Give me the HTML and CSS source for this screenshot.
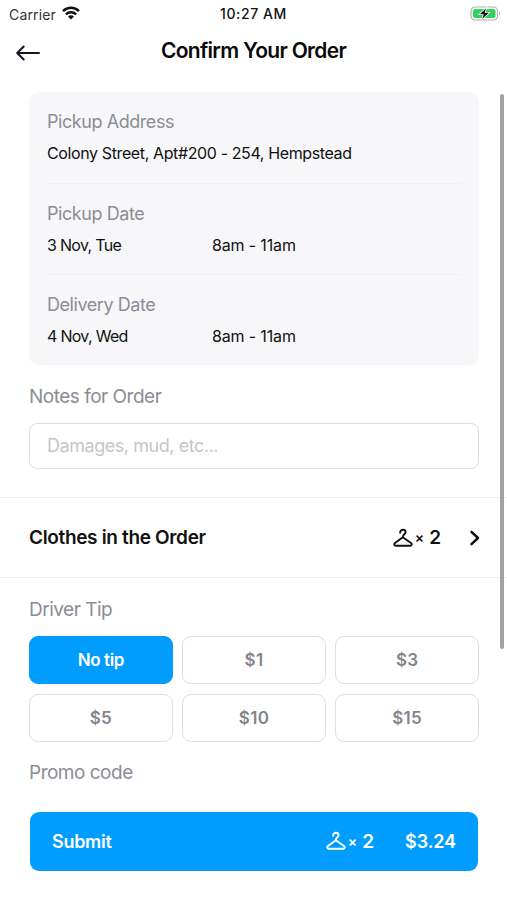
FILE: index.html
```html
<!DOCTYPE html>
<html lang="en">
<head>
<meta charset="utf-8">
<title>Confirm Your Order</title>
<link rel="stylesheet" href="styles.css">
</head>
<body>
<svg class="defs" width="0" height="0" aria-hidden="true">
  <symbol id="hanger" viewBox="0 0 20 20">
    <path d="M7.100 4.700C7.100 2.900 8.300 1.800 9.900 1.800c1.500 0 2.700 1 2.700 2.400 0 2.100-3 2.200-2.800 5.100M9.800 9.300 2 15c-1.300 1-.8 2.700.8 2.700h14.400c1.600 0 2.100-1.700.8-2.700z" fill="none" stroke="currentColor" stroke-width="1.900" stroke-linecap="round" stroke-linejoin="round"/>
  </symbol>
</svg>
<div class="screen">
  <div class="status">
    <div class="carrier"><span class="carrier-name">Carrier</span>
      <svg class="wifi" width="18" height="14" viewBox="0 0 18 14"><g fill="none" stroke="#111" stroke-width="2.500"><path d="M1 5.100a11.300 11.300 0 0 1 16 0"/><path d="M3.900 8.300a7.200 7.200 0 0 1 10.200 0"/></g><path d="M9 13.600 6 10.600a4.200 4.200 0 0 1 6 0z" fill="#111"/></svg>
    </div>
    <span class="clock">10:27 AM</span>
    <svg class="battery" width="32" height="16" viewBox="0 0 32 16"><rect x="1" y="1" width="26.500" height="13" rx="4" fill="#fff" stroke="#b0b0b0" stroke-width="1.200"/><rect x="3" y="3" width="22.500" height="9" rx="2" fill="#35d162"/><path d="M29 5.500v4.200c1.600-.7 1.600-3.500 0-4.200z" fill="#aaa"/><path d="M16 2.200 9.800 8.200h4l-1.600 4.800 6.600-6.200h-4.200z" fill="#111" stroke="#fff" stroke-width="1.600" paint-order="stroke"/></svg>
  </div>
  <header class="header">
    <svg class="back" width="26" height="18" viewBox="0 0 26 18"><path d="M24 9H2.500M8.700 2.500 2.200 9l6.500 6.500" fill="none" stroke="#15151f" stroke-width="2" stroke-linecap="round" stroke-linejoin="round"/></svg>
    <h1 class="title">Confirm Your Order</h1>
  </header>
  <main class="content">
    <section class="card">
      <div class="row"><div class="label">Pickup Address</div><div class="values"><span class="street">Colony Street, Apt#200 - 254, Hempstead</span></div></div>
      <div class="row"><div class="label">Pickup Date</div><div class="values"><span class="day">3 Nov, Tue</span><span class="hours">8am - 11am</span></div></div>
      <div class="row"><div class="label">Delivery Date</div><div class="values"><span class="day">4 Nov, Wed</span><span class="hours">8am - 11am</span></div></div>
    </section>
    <div class="label section-label notes-label">Notes for Order</div>
    <div class="input">Damages, mud, etc...</div>
    <section class="clothes">
      <h2 class="clothes-title">Clothes in the Order</h2>
      <div class="count"><svg class="hanger" width="20" height="20"><use href="#hanger"/></svg><span class="times">×</span><span class="number">2</span></div>
      <svg class="chevron" width="12" height="18" viewBox="0 0 12 18"><path d="M2.500 2.800 9 9l-6.500 6.200" fill="none" stroke="#111" stroke-width="2.500" stroke-linecap="round" stroke-linejoin="round"/></svg>
    </section>
    <div class="label section-label tip-label">Driver Tip</div>
    <div class="tips">
      <div class="tip selected">No tip</div><div class="tip">$1</div><div class="tip">$3</div>
      <div class="tip">$5</div><div class="tip">$10</div><div class="tip">$15</div>
    </div>
    <div class="label section-label promo-label">Promo code</div>
  </main>
  <div class="submit"><span class="submit-text">Submit</span>
    <div class="count"><svg class="hanger" width="20" height="20"><use href="#hanger"/></svg><span class="times">×</span><span class="number">2</span></div>
    <span class="price">$3.24</span>
  </div>
  <div class="scrollbar"></div>
</div>
</body>
</html>
```
FILE: styles.css
```css
* { box-sizing: border-box; }
body { margin: 0; background: #fff; color: #111; font-family: Inter, "Liberation Sans", sans-serif; }
.defs { position: absolute; }
.screen { position: relative; width: 507px; height: 900px; overflow: hidden; }
.status { display: grid; grid-template-columns: 1fr auto 1fr; align-items: center; height: 28px; padding: 0 5px 0 9px; font-size: 14px; }
.carrier { display: flex; align-items: center; gap: 6px; color: #333; letter-spacing: .15px; }
.wifi { margin-top: -3px; }
.clock { margin: -1px 4px 0 0; font-weight: 500; letter-spacing: .6px; }
.battery { justify-self: end; }
.header { display: grid; grid-template-columns: 40px 1fr 40px; align-items: center; height: 46px; padding: 0 15px; }
.back { margin-top: 4px; }
.title { margin: -1px 0 0; text-align: center; font-size: 21px; font-weight: 600; letter-spacing: -.7px; color: #0a0a0a; }
.content { padding: 18px 28px 0 29px; }
.card { height: 273px; padding: 0 18px; background: #f7f7fa; border-radius: 10px; }
.row { height: 91.500px; padding-top: 18px; border-bottom: 1px solid #f0f0f3; }
.row:last-child { border-bottom: 0; }
.label { color: #8d8c95; font-size: 18px; line-height: 24px; letter-spacing: -.44px; }
.section-label { font-size: 19px; letter-spacing: -.5px; }
.values { display: flex; margin-top: 8px; font-size: 16px; line-height: 22px; letter-spacing: -.38px; }
.day { width: 165px; letter-spacing: -.7px; }
.hours { letter-spacing: -.15px; }
.notes-label { margin-top: 20px; }
.input { height: 46px; margin-top: 14px; padding: 0 17px; border: 1px solid #dedee1; border-radius: 8px; color: #c6c6c8; font-size: 18px; line-height: 44px; letter-spacing: -.45px; }
.clothes { display: flex; align-items: center; height: 81px; margin: 28px -28px 0 -29px; padding: 0 26px 0 29px; border: solid #ededef; border-width: 1px 0; }
.clothes-title { flex: 1; margin: 0; font-size: 19px; font-weight: 600; letter-spacing: -.34px; }
.count { display: flex; align-items: center; }
.times { margin-left: 2px; font-size: 14px; font-weight: 600; }
.number { margin-left: 5px; font-size: 19px; font-weight: 600; }
.chevron { margin-left: 28px; }
.tip-label { margin-top: 20px; }
.tips { display: grid; grid-template-columns: repeat(3, 1fr); grid-auto-rows: 48px; gap: 9.500px; margin-top: 14px; }
.tip { display: flex; align-items: center; justify-content: center; border: 1px solid #dedee1; border-radius: 9px; color: #85848c; font-size: 17px; font-weight: 600; letter-spacing: .3px; }
.tip.selected { border-color: #009dff; background: #009dff; color: #fff; letter-spacing: -.4px; }
.promo-label { margin-top: 19px; }
.submit { display: flex; align-items: center; height: 59px; margin: 27px 29px 0 30px; padding: 0 22px; border-radius: 9px; background: #009dff; color: #fff; font-size: 18px; font-weight: 600; }
.submit-text { flex: 1; letter-spacing: -.3px; }
.price { margin-left: 31px; letter-spacing: -.1px; }
.scrollbar { position: absolute; top: 94px; left: 500px; width: 4px; height: 555px; border-radius: 2px; background: #a2a2a2; }
```
